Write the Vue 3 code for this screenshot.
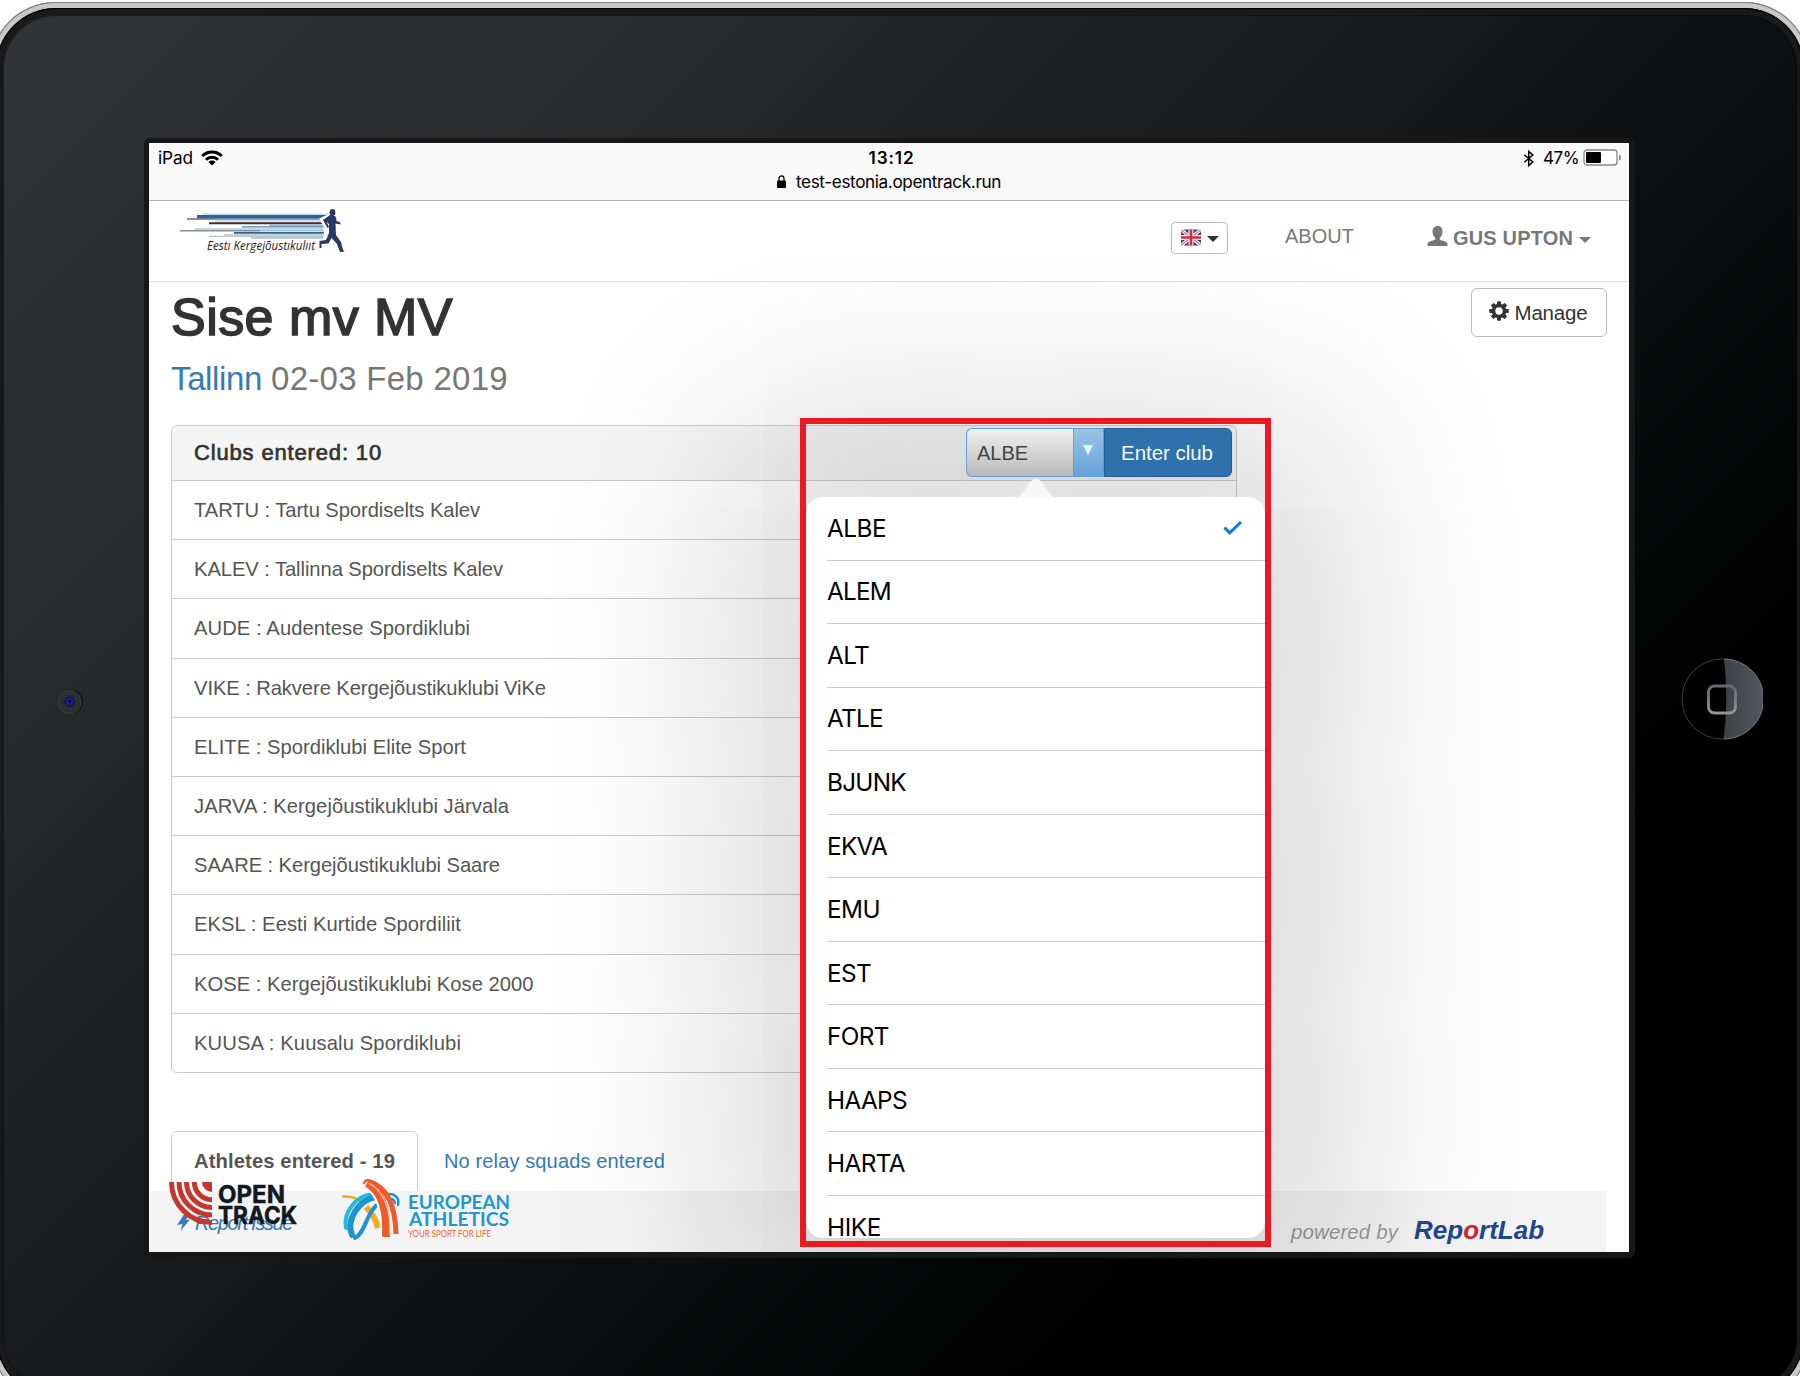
<script setup>
const clubs = [
  ['TARTU : Tartu Spordiselts Kalev', 286],
  ['KALEV : Tallinna Spordiselts Kalev', 309],
  ['AUDE : Audentese Spordiklubi', 276],
  ['VIKE : Rakvere Kergejõustikuklubi ViKe', 352],
  ['ELITE : Spordiklubi Elite Sport', 272],
  ['JARVA : Kergejõustikuklubi Järvala', 315],
  ['SAARE : Kergejõustikuklubi Saare', 306],
  ['EKSL : Eesti Kurtide Spordiliit', 267],
  ['KOSE : Kergejõustikuklubi Kose 2000', 339.5],
  ['KUUSA : Kuusalu Spordiklubi', 267],
]
const options = [
  ['ALBE', 59], ['ALEM', 64], ['ALT', 42], ['ATLE', 56], ['BJUNK', 79], ['EKVA', 60],
  ['EMU', 53], ['EST', 44], ['FORT', 62], ['HAAPS', 80], ['HARTA', 78], ['HIKE', 54],
]
const teeth = [0, 45, 90, 135, 180, 225, 270, 315]

// Tracks a line of text so that it fills the given width.
const vFit = {
  mounted(el, { value }) {
    const gap = value - el.getBoundingClientRect().width
    el.style.letterSpacing = gap / el.textContent.trim().length + 'px'
  },
}
</script>

<template>
  <div class="stage">
    <div class="rim"><div class="face"></div></div>

    <svg class="camera" viewBox="0 0 26 26">
      <defs>
        <radialGradient id="lens"><stop offset="0" stop-color="#14161c" /><stop offset=".6" stop-color="#2b2e32" /><stop offset="1" stop-color="#2c2f32" /></radialGradient>
      </defs>
      <circle cx="13.600" cy="12.600" r="12.200" fill="#0f1011" />
      <circle cx="12.600" cy="13" r="11.600" fill="url(#lens)" stroke="#3e4144" stroke-width=".8" />
      <circle cx="12.600" cy="12.500" r="5" fill="#15162e" />
      <circle cx="12.600" cy="12.300" r="3.600" fill="#1820b8" />
      <circle cx="12.900" cy="12.300" r="1.700" fill="#080a40" />
    </svg>

    <svg class="home" viewBox="0 0 82 82">
      <defs>
        <linearGradient id="shine" x1="0" x2="1" y1="0" y2="0"><stop offset="0" stop-color="#3c4147" /><stop offset="1" stop-color="#535860" /></linearGradient>
        <linearGradient id="sq" x1="0" x2="0" y1="0" y2="1"><stop offset="0" stop-color="#66686c" /><stop offset="1" stop-color="#969494" /></linearGradient>
      </defs>
      <circle cx="41" cy="41" r="40" fill="#000" stroke="#3c3c3e" stroke-width="1" />
      <path d="M43 1A40 40 0 0 1 42.500 81Q45.500 60 45.200 41Q45 18 43 1Z" fill="url(#shine)" />
      <path d="M43 1A40 40 0 0 1 42.500 81" fill="none" stroke="#74787e" stroke-width="1" />
      <rect x="27.500" y="28" width="27" height="27" rx="6" fill="none" stroke="url(#sq)" stroke-width="2.800" />
    </svg>

    <main class="screen">
      <header class="status">
        <div class="status-row">
          <span class="left">
            <span v-fit="35">iPad</span>
            <svg width="22" height="16" viewBox="0 0 22 16"><g fill="none" stroke="#000" stroke-width="3"><path d="M1.300 6A13.800 13.800 0 0 1 20.700 6" /><path d="M4.900 9.700A8.600 8.600 0 0 1 17.100 9.700" /></g><path d="M11 15.500L7.400 11.900A5.200 5.200 0 0 1 14.600 11.900Z" /></svg>
          </span>
          <b v-fit="46">13:12</b>
          <span class="right">
            <svg width="12" height="17" viewBox="0 0 12 17"><path d="M1.300 4.700L9.800 12L5.700 15.600V1.400L9.800 5L1.300 12.300" fill="none" stroke="#000" stroke-width="1.500" /></svg>
            <span v-fit="36">47%</span>
            <svg width="39" height="17" viewBox="0 0 39 17"><rect x="1" y="1" width="33" height="15" rx="3" fill="#fff" stroke="#888" stroke-width="1.300" /><rect x="3" y="3" width="15" height="11" rx="1" /><path d="M36 5.500Q38 6 38 8.500Q38 11 36 11.500Z" fill="#888" /></svg>
          </span>
        </div>
        <div class="address">
          <svg width="9" height="14" viewBox="0 0 9 14"><rect y="5.500" width="9" height="7.500" rx="1" /><path d="M2 6V3.500A2.500 2.700 0 0 1 7 3.500V6" fill="none" stroke="#000" stroke-width="1.300" /></svg>
          <span v-fit="205">test-estonia.opentrack.run</span>
        </div>
      </header>

      <nav class="nav">
        <svg class="brand" width="170" height="50" viewBox="0 0 170 50">
          <g>
            <path d="M22 4.500H152V6H22Z" fill="#c9dce8" /><path d="M17 6H150V9.300H17Z" fill="#2465a3" />
            <path d="M7 9.500H144V10.600H7Z" fill="#223" /><path d="M35 10.800H142V13H35Z" fill="#cfdde6" />
            <path d="M29 13.300H142V15.200H29Z" fill="#2e3337" /><path d="M89 15.300H144V17.300H89Z" fill="#a9b2c4" />
            <path d="M62 17.300H144V18.600H62Z" fill="#4e86b8" /><path d="M15 18.900H145V21H15Z" fill="#c0d8df" />
            <path d="M0 21H80V22.400H0Z" fill="#868f8c" /><path d="M80 21H145V22.600H80Z" fill="#a8c0d4" />
            <path d="M54 22.900H145V24.800H54Z" fill="#345f93" /><path d="M44 24.900H145V26.700H44Z" fill="#bcd2da" />
            <path d="M29 26.700H144V27.800H29Z" fill="#a9b4b9" /><path d="M71 27.800H143V29.800H71Z" fill="#b1c3d5" />
          </g>
          <path d="M152 5L141 10L145 18V30" fill="none" stroke="#fff" stroke-width="2.500" />
          <g fill="#2b3767">
            <ellipse cx="152.500" cy="3.500" rx="2.900" ry="3.400" />
            <path d="M150 6L155 7Q157 9 156.500 12L160.500 13.500V15.500L155.500 14.500L156 26L161 33L163 41L165 42.500L160 43L157 35L151.500 29L148.500 34.500L141.500 35L141.500 39H139.500L139.500 32L146 31L149 24V15L146.500 12.500L149 18L147.500 19L143 11Z" />
          </g>
          <text x="27" y="41.300" textLength="108" lengthAdjust="spacingAndGlyphs" font-family="Open Sans, sans-serif" font-style="italic" font-size="12.500" fill="#222">Eestı Kergejõustıkulııt</text>
        </svg>
        <span class="flag-btn">
          <svg width="21" height="17" viewBox="0 0 21 17"><rect width="21" height="17" rx="2.500" fill="#34408c" /><path d="M1 1L20 16M20 1L1 16" stroke="#f4eef4" stroke-width="3.600" /><path d="M1 1L20 16M20 1L1 16" stroke="#d8616f" stroke-width="1.100" /><path d="M10.500 0V17M0 8.500H21" stroke="#f8e8ec" stroke-width="5.200" /><path d="M10.500 0V17M0 8.500H21" stroke="#d52b40" stroke-width="2.700" /></svg>
          <i class="caret"></i>
        </span>
        <span class="about" v-fit="69">ABOUT</span>
        <span class="user">
          <svg width="21" height="20" viewBox="0 0 21 20"><path d="M10.500 0C13.700 0 15.500 2.200 15.500 5.600C15.500 8.300 14.300 10.600 12.800 12V13.500C15 15 20.500 15.300 20.500 18V20H.5V18C.5 15.300 6 15 8.200 13.500V12C6.700 10.600 5.500 8.300 5.500 5.600C5.500 2.200 7.300 0 10.500 0Z" fill="#777" /></svg>
          <b v-fit="120">GUS UPTON</b>
          <i class="caret grey"></i>
        </span>
      </nav>

      <section class="content">
        <div class="title-row">
          <h1 v-fit="282">Sise mv MV</h1>
          <button class="manage">
            <svg width="20" height="20" viewBox="-10 -10 20 20"><rect v-for="t in teeth" :key="t" x="-2" y="-9.700" width="4" height="5" rx=".6" fill="#333" :transform="`rotate(${t})`" /><circle r="5.500" fill="none" stroke="#333" stroke-width="3.600" /></svg>
            <span v-fit="73">Manage</span>
          </button>
        </div>
        <h2><a v-fit="91">Tallinn</a><span v-fit="237">02-03 Feb 2019</span></h2>

        <div class="panel">
          <div class="panel-head">
            <span v-fit="188">Clubs entered: 10</span>
            <div class="picker">
              <div class="select"><span v-fit="51">ALBE</span></div>
              <div class="drop"><i></i></div>
              <button class="enter"><span v-fit="92">Enter club</span></button>
            </div>
          </div>
          <div v-for="[name, w] in clubs" :key="name" class="club"><span v-fit="w">{{ name }}</span></div>
        </div>

        <div class="tabs">
          <div class="tab"><span v-fit="201">Athletes entered - 19</span></div>
          <a v-fit="221">No relay squads entered</a>
        </div>
      </section>

      <footer class="foot">
        <svg class="bolt" width="14" height="16" viewBox="0 0 14 16"><path d="M6.500 0H12L9 5L13 4.500L3.500 16L5.500 9L0 10Z" fill="#3a7cb8" /></svg>
        <em class="report"><span v-fit="97">Report Issue</span></em>
        <svg class="logos" width="350" height="64" viewBox="0 0 350 64">
          <g fill="none" stroke="#c4372c" stroke-width="5">
            <path d="M3.500 4A40.500 40.500 0 0 0 44 44.500M11 4A33 33 0 0 0 44 37M18.500 4A25.500 25.500 0 0 0 44 29.500M26.300 4A17.700 17.700 0 0 0 44 21.700" />
          </g>
          <path d="M34 4H44V14A10 10 0 0 1 34 4Z" fill="#c4372c" />
          <g font-family="Inter, sans-serif" font-weight="700" fill="#101820" font-size="24.500" stroke="#101820" stroke-width=".5">
            <text x="50" y="25.200" textLength="67" lengthAdjust="spacingAndGlyphs">OPEN</text>
            <text x="50" y="46.300" textLength="79" lengthAdjust="spacingAndGlyphs">TRACK</text>
          </g>
          <g fill="none" stroke-linecap="round">
            <path d="M175 18.500Q186 18 194 24" stroke="#f6a823" stroke-width="2.500" />
            <path d="M198 29Q207 38 210 50" stroke="#f6a823" stroke-width="6" stroke-linecap="butt" />
            <path d="M178 50C175 34 188 18 204 16" stroke="#26b9dc" stroke-width="4" />
            <path d="M184 57C178 42 190 22 208 19" stroke="#1b95cf" stroke-width="6" />
            <path d="M187 60C198 55 198 32 213 24" stroke="#1b95cf" stroke-width="4" />
            <path d="M216 17C226 14 232 19 230 27M219 21Q226 20 227 25" stroke="#1e93cf" stroke-width="2.500" />
            <path d="M197 5Q219 14 218 59" stroke="#fff" stroke-width="11" stroke-linecap="butt" />
            <path d="M199 5Q220 16 218 59" stroke="#ef5a2b" stroke-width="8" stroke-linecap="butt" />
            <path d="M202 4Q227 12 228 56" stroke="#ef5a2b" stroke-width="5" stroke-linecap="butt" />
            <path d="M196 5Q198 0 205 4" stroke="#ef5a2b" stroke-width="2.500" />
            <path d="M201 5Q223 17 222 57" stroke="#f9c4ae" stroke-width="1.200" stroke-linecap="butt" />
          </g>
          <g font-family="Lato, sans-serif" font-weight="700" fill="#2097cf">
            <text x="240" y="31" font-size="19.500" textLength="102" lengthAdjust="spacingAndGlyphs">EUROPEAN</text>
            <text x="241" y="48" font-size="19.500" textLength="100" lengthAdjust="spacingAndGlyphs">ATHLETICS</text>
            <text x="240" y="59.200" font-size="9.500" font-weight="400" fill="#ef5f3a" textLength="83" lengthAdjust="spacingAndGlyphs">YOUR SPORT FOR LIFE</text>
          </g>
        </svg>
        <em class="powered"><span v-fit="107">powered by</span></em>
        <b class="rl"><span v-fit="130">Rep<i>o</i>rtLab</span></b>
      </footer>

      <div class="shade"></div>
      <svg class="arrow" width="42" height="20" viewBox="0 0 42 20"><path d="M0 20C7 19 10 10 16 3Q21-2 26 3C32 10 35 19 42 20Z" fill="#f7f7f7" /></svg>
      <div class="popover">
        <div v-for="([code, w], i) in options" :key="code" class="option">
          <span v-fit="w">{{ code }}</span>
          <svg v-if="i === 0" width="20" height="16" viewBox="0 0 20 16"><path d="M1.500 7.500L6.700 12.800L18 2" fill="none" stroke="#0b79e8" stroke-width="3" /></svg>
        </div>
      </div>
      <div class="highlight"></div>
    </main>
  </div>
</template>

<style>
body { margin: 0; background: #fff; }
</style>

<style scoped>
* { box-sizing: border-box; }
.stage { position: relative; width: 1800px; height: 1376px; overflow: hidden; padding: 138px 165px 0 144px; font: 20px/1.4 "Liberation Sans", Arial, sans-serif; color: #555; }
.stage span, .stage b { white-space: nowrap; }
.rim { position: absolute; left: -10px; right: -10px; top: 2px; height: 1401px; border-radius: 66px; padding: 6px; background: #000; box-shadow: inset 0 0 0 1px #808080, inset 0 0 0 6px #c8c8c8; }
.face { height: 100%; border-radius: 60px; border: 7px solid #19191b; background: linear-gradient(135deg, #323337 0%, #27282a 25%, #1a1b1c 43%, #0e0f10 57%, #020303 72%, #000 78%); box-shadow: inset 0 0 0 1px rgba(0, 0, 0, .45); outline: 1px solid #000; outline-offset: -1px; }
.camera { position: absolute; left: 57px; top: 689px; width: 26px; height: 26px; }
.home { position: absolute; left: 1681px; top: 658px; width: 82px; height: 82px; }
.screen { position: relative; width: 1491px; height: 1120px; border: solid #171717; border-width: 5px 6px 6px 5px; border-radius: 6px; background: #fff; overflow: hidden; }

.status { height: 58px; background: #f9f9f9; border-bottom: 1px solid #b2b2b2; font-family: Inter, "Liberation Sans", sans-serif; color: #000; font-size: 17.200px; line-height: 24px; }
.status-row { display: grid; grid-template-columns: 1fr auto 1fr; height: 26px; padding: 3px 7px 0 9px; align-items: center; }
.status-row b { font-weight: 600; margin-left: 3px; }
.left, .right { display: flex; align-items: center; gap: 8px; }
.right { justify-content: flex-end; gap: 4px; }
.right svg:first-child { margin-right: 4px; }
.right svg:last-child, .left svg { margin-top: -1px; }
.status-row span span, .status-row b, .address span { display: inline-block; }
.address { display: flex; justify-content: center; align-items: center; gap: 10px; height: 26px; }

.nav { height: 81px; border-bottom: 1px solid #e0e0e0; display: flex; align-items: flex-start; background: #fff; color: #777; }
.brand { margin: 8px 0 0 31px; overflow: visible; }
.flag-btn { margin: 21px 0 0 821px; width: 57px; height: 32px; border: 1px solid #bbb; border-radius: 4px; display: flex; align-items: center; padding: 0 8px 2px 9px; gap: 6px; }
.caret { width: 0; height: 0; border: 6px solid transparent; border-top-color: #333; border-bottom: 0; margin-top: 4px; }
.caret.grey { border-top-color: #777; margin: 3px 0 0 6px; }
.about { margin: 21px 0 0 57px; font-size: 20px; }
.user { margin: 23px 0 0 73px; display: flex; align-items: center; font-size: 20px; }
.user svg { margin-right: 5px; margin-top: -4px; }

.content { padding: 0 22px; }
.title-row { display: flex; justify-content: space-between; height: 74px; }
h1 { margin: 6px 0 0; font-size: 52px; line-height: 59px; font-weight: 400; color: #333; -webkit-text-stroke: 1.600px #333; align-self: flex-start; white-space: nowrap; }
.manage { margin: 6px 0 0; width: 136px; height: 49px; border: 1px solid #bbb; border-radius: 6px; background: #fff; color: #333; font: 20.500px "Liberation Sans", sans-serif; display: flex; align-items: center; justify-content: center; gap: 6px; padding-right: 8px; }
.manage svg { margin-top: -3px; }
h2 { margin: 0; height: 69px; font-size: 33px; line-height: 46px; font-weight: 400; color: #777; display: flex; gap: 9px; }
h2 a { color: #337ab7; align-self: flex-start; }
h2 span { align-self: flex-start; }
.panel { width: 1066px; border: 1px solid #ccc; border-radius: 6px; overflow: hidden; background: #fff; }
.panel-head { height: 54px; background: #f5f5f5; padding: 0 4px 0 22px; display: flex; align-items: center; justify-content: space-between; color: #333; font-size: 22px; -webkit-text-stroke: .7px #333; }
.picker { position: relative; z-index: 2; display: flex; height: 49px; font-size: 20px; -webkit-text-stroke: 0; margin-top: -1px; }
.select { width: 107px; border: 1px solid #5d9fd6; border-right: 0; border-radius: 6px 0 0 6px; background: linear-gradient(#f1f1f1, #b9b9b9); padding: 10px 10px; color: #444; }
.drop { width: 31px; background: linear-gradient(#9bc3e5, #65a3d9); border: 1px solid #5d9fd6; display: flex; justify-content: center; }
.drop i { margin: 16px 1px 0 0; width: 0; height: 0; border: 5.500px solid transparent; border-top: 10px solid #eef5fb; border-bottom: 0; }
.enter { width: 128px; border: 1px solid #255f96; border-radius: 0 6px 6px 0; background: #2e71ac; color: #f5f8fb; font: 20.500px "Liberation Sans", sans-serif; padding: 0 2px 0 0; }
.club { height: 59.200px; border-top: 1px solid #ccc; padding-left: 22px; line-height: 58px; font-size: 20.200px; }
.club span, .panel-head span, .tab span, .tabs a, .foot span { display: inline-block; }
.tabs { display: flex; margin-top: 58px; height: 120px; }
.tab { width: 247px; height: 120px; border: 1px solid #ccc; border-radius: 6px 6px 0 0; padding: 15px 0 0 22px; font-weight: 700; font-size: 20.200px; }
.tabs a { margin: 16px 0 0 26px; color: #337ab7; align-self: flex-start; white-space: nowrap; }

.foot { position: absolute; left: 1px; right: 23px; top: 1048px; height: 61px; background: #f4f4f4; }
.foot > * { position: absolute; }
.bolt { left: 27px; top: 24px; }
.report { left: 45px; top: 18px; color: #337ab7; font-size: 20px; }
.logos { left: 18px; top: -13px; }
.powered { left: 1141px; top: 27px; color: #999; font-size: 20.500px; }
.rl { left: 1264px; top: 21px; font-size: 26px; font-style: italic; color: #20468f; }
.rl i { color: #d8232e; }

.shade { position: absolute; left: 657px; top: 354px; width: 459px; height: 741px; border-radius: 17px; box-shadow: 0 0 190px 80px rgba(0, 0, 0, .155); background: linear-gradient(rgba(0, 0, 0, .11) 50%, rgba(0, 0, 0, .14)); clip-path: inset(-296px -600px -200px -700px); pointer-events: none; }
.arrow { position: absolute; left: 866px; top: 335px; z-index: 3; }
.popover { position: absolute; left: 657px; top: 354px; width: 459px; height: 741px; overflow: hidden; border-radius: 17px; background: #fff; }
.option { margin-left: 21px; height: 63.550px; border-bottom: 1px solid #ccc; display: flex; align-items: center; justify-content: space-between; padding: 0 22px 1px 0; font: 24.300px Inter, "Liberation Sans", sans-serif; color: #000; }
.highlight { position: absolute; left: 651px; top: 275px; width: 471px; height: 829px; border: 6px solid #ee1820; }
</style>
